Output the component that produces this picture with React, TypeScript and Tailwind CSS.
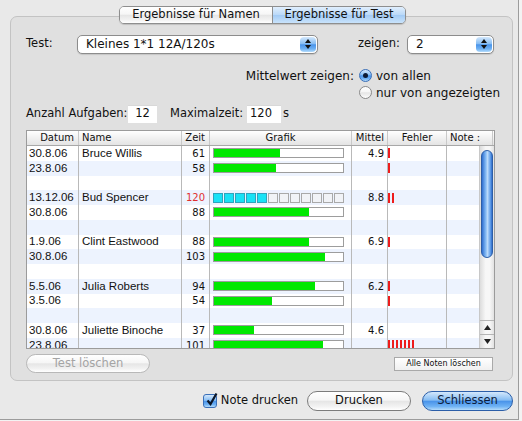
import React from "react";

type Row = { d: string; n?: string; t: number; m?: string; f: number } | null;

const rows: Row[] = [
  { d: "30.8.06", n: "Bruce Willis", t: 61, m: "4.9", f: 1 },
  { d: "23.8.06", t: 58, f: 1 },
  null,
  { d: "13.12.06", n: "Bud Spencer", t: 120, m: "8.8", f: 2 },
  { d: "30.8.06", t: 88, f: 0 },
  null,
  { d: "1.9.06", n: "Clint Eastwood", t: 88, m: "6.9", f: 1 },
  { d: "30.8.06", t: 103, f: 0 },
  null,
  { d: "5.5.06", n: "Julia Roberts", t: 94, m: "6.2", f: 1 },
  { d: "3.5.06", t: 54, f: 1 },
  null,
  { d: "30.8.06", n: "Juliette Binoche", t: 37, m: "4.6", f: 0 },
  { d: "23.8.06", t: 101, f: 7 },
];

const aquaBlue =
  "bg-[linear-gradient(to_bottom,#d4e8fc,#86bdf3_45%,#4a94ea_52%,#6fb2f4_80%,#b5dcfb)]";
const aquaWhite =
  "bg-[linear-gradient(to_bottom,#ffffff,#f6f6f6_45%,#e6e6e6_52%,#f2f2f2_80%,#ffffff)]";

function Popup({ className, label }: { className: string; label: string }) {
  return (
    <div
      className={`flex h-[19px] items-stretch rounded-[5px] border border-[#8c8c8c] bg-white p-[1px] shadow-[0_1px_1px_rgba(0,0,0,0.12)] ${className}`}
    >
      <div className="flex flex-1 items-center pl-[7px] text-[12px]">{label}</div>
      <div
        className={`flex w-[16px] flex-col items-center justify-center gap-[2px] rounded-[4px] ${aquaBlue}`}
      >
        <svg width="6" height="4" viewBox="0 0 6 4">
          <path d="M0 4L3 0L6 4Z" fill="#111" />
        </svg>
        <svg width="6" height="4" viewBox="0 0 6 4">
          <path d="M0 0L3 4L6 0Z" fill="#111" />
        </svg>
      </div>
    </div>
  );
}

function Radio({ on }: { on?: boolean }) {
  return on ? (
    <div
      className={`flex h-[13px] w-[13px] shrink-0 items-center justify-center rounded-full border border-[#3a6fb8] ${aquaBlue}`}
    >
      <div className="h-[5px] w-[5px] rounded-full bg-[#0c1a33]" />
    </div>
  ) : (
    <div
      className={`h-[13px] w-[13px] shrink-0 rounded-full border border-[#8a8a8a] ${aquaWhite}`}
    />
  );
}

function Bar({ t }: { t: number }) {
  if (t >= 120) {
    return (
      <div className="ml-[3px] flex w-[131px] gap-[1px]">
        {Array.from({ length: 12 }).map((_, i) => (
          <div
            key={i}
            className={
              i < 5
                ? "h-[10px] w-[10px] border border-[#2fa3bd] bg-[#19e2f6]"
                : "h-[10px] w-[10px] border border-[#a9a9a9] bg-[#f1f3f7]"
            }
          />
        ))}
      </div>
    );
  }
  return (
    <div className="ml-[3px] h-[10px] w-[131px] border border-[#9d9d9d] bg-white">
      <div className="h-full bg-[#00e800]" style={{ width: `${(t / 120) * 100}%` }} />
    </div>
  );
}

function TableRow({ row, i }: { row: Row; i: number }) {
  const bg = i % 2 === 1 ? "bg-[#edf3fe]" : "bg-white";
  const line = "border-r border-[#b9b9b9]";
  return (
    <div className={`flex h-[14.75px] shrink-0 items-stretch ${bg}`}>
      <div className={`flex w-[52px] items-center whitespace-nowrap pl-[2px] font-['Liberation_Sans',sans-serif] text-[11.5px] ${line}`}>
        {row?.d}
      </div>
      <div className={`flex w-[103px] items-center whitespace-nowrap pl-[3px] font-['Liberation_Sans',sans-serif] text-[11.5px] ${line}`}>
        {row?.n}
      </div>
      <div
        className={`flex w-[28px] items-center justify-end pr-[4px] text-[10px] ${
          row && row.t >= 120 ? "text-[#e03030]" : ""
        } ${line}`}
      >
        {row?.t}
      </div>
      <div className={`flex w-[142px] items-center ${line}`}>{row && <Bar t={row.t} />}</div>
      <div className={`flex w-[36px] items-center justify-end pr-[3px] text-[10px] ${line}`}>
        {row?.m}
      </div>
      <div className={`flex w-[59px] items-center gap-[2px] ${line}`}>
        {row &&
          Array.from({ length: row.f }).map((_, k) => (
            <div key={k} className="h-[10px] w-[2px] bg-[#ee1c1c]" />
          ))}
      </div>
      <div className="w-[32px]" />
    </div>
  );
}

function Scrollbar() {
  return (
    <div className="flex w-[15px] flex-col border-l border-[#c8c8c8] bg-[linear-gradient(to_right,#dcdcdc,#f7f7f7_40%,#f7f7f7_70%,#e2e2e2)]">
      <div className="flex-1 px-[1px] pt-[4px] pb-[2px]">
        <div className="h-[108px] rounded-full border border-[#2d5fa8] bg-[linear-gradient(to_right,#2f6fd0,#7db5f2_35%,#b9dafb_55%,#5d9ae6_85%,#2f6ccc)]" />
      </div>
      <div className="flex h-[14px] items-center justify-center border-t border-[#b5b5b5]">
        <svg width="7" height="5" viewBox="0 0 7 5">
          <path d="M0 5L3.5 0L7 5Z" fill="#222" />
        </svg>
      </div>
      <div className="flex h-[14px] items-center justify-center border-t border-[#b5b5b5]">
        <svg width="7" height="5" viewBox="0 0 7 5">
          <path d="M0 0L3.5 5L7 0Z" fill="#222" />
        </svg>
      </div>
    </div>
  );
}

function Table() {
  const h = "border-r border-[#c9c9c9]";
  return (
    <div className="mt-[6px] w-[469px] border border-[#9b9b9b] bg-white">
      <div className="flex h-[15px] border-b border-[#a8a8a8] bg-[linear-gradient(to_bottom,#ffffff,#f1f1f1_50%,#e4e4e4)] text-[10px] leading-[14px]">
        <div className={`w-[52px] pr-[4px] text-right ${h}`}>Datum</div>
        <div className={`w-[103px] pl-[3px] ${h}`}>Name</div>
        <div className={`w-[28px] pr-[4px] text-right ${h}`}>Zeit</div>
        <div className={`w-[142px] text-center ${h}`}>Grafik</div>
        <div className={`w-[36px] pr-[3px] text-right ${h}`}>Mittel</div>
        <div className={`w-[59px] text-center ${h}`}>Fehler</div>
        <div className={`w-[46px] overflow-hidden whitespace-nowrap pl-[3px] ${h}`}>Note :</div>
      </div>
      <div className="flex h-[202px] overflow-hidden">
        <div className="flex w-[452px] flex-col overflow-hidden">
          {rows.map((r, i) => (
            <TableRow key={i} row={r} i={i} />
          ))}
        </div>
        <Scrollbar />
      </div>
    </div>
  );
}

export default function App() {
  return (
    <div className="h-[421px] w-[522px] bg-[#f3f3f3] font-['DejaVu_Sans',sans-serif] text-[11.5px] text-[#111]">
      <div className="flex h-[420px] w-[519px] flex-col border-r border-b border-[#9c9c9c] bg-[#e9e9e9] pt-[6px]">
        {/* tabs */}
        <div className="relative z-10 ml-[119px] flex h-[18px] w-[287px] overflow-hidden rounded-[5px] border border-[#8e8e8e] shadow-[0_1px_1px_rgba(0,0,0,0.15)]">
          <div className={`flex w-[153px] items-center justify-center border-r border-[#8e8e8e] ${aquaWhite}`}>
            Ergebnisse für Namen
          </div>
          <div className="flex flex-1 items-center justify-center bg-[linear-gradient(to_bottom,#e1effd,#b9d8f8_50%,#a3cbf5_52%,#c9e3fb)]">
            Ergebnisse für Test
          </div>
        </div>

        {/* group box */}
        <div className="-mt-[8px] ml-[10px] flex h-[365px] w-[503px] flex-col rounded-[7px] border border-[#c3c3c3] bg-[#e0e0e0] pt-[17px] pr-[17px] pl-[15px]">
          <div className="flex h-[20px] items-center">
            <div className="w-[51px]">Test:</div>
            <Popup className="w-[241px]" label="Kleines 1*1 12A/120s" />
            <div className="ml-[40px] w-[49px]">zeigen:</div>
            <Popup className="w-[87px]" label="2" />
          </div>

          <div className="mt-[13px] flex h-[17px] items-center whitespace-nowrap">
            <div className="w-[333px] shrink-0 pr-[5px] text-right text-[12px]">Mittelwert zeigen:</div>
            <Radio on />
            <div className="ml-[4px] text-[12px]">von allen</div>
          </div>
          <div className="flex h-[17px] items-center whitespace-nowrap pl-[333px]">
            <Radio />
            <div className="ml-[4px] text-[12px]">nur von angezeigten</div>
          </div>

          <div className="mt-[3px] flex h-[20px] items-center">
            <div className="w-[102px]">Anzahl Aufgaben:</div>
            <div className="flex h-[18px] w-[29px] items-center justify-center bg-white shadow-[inset_0_1px_0_#d8d8d8]">
              12
            </div>
            <div className="ml-[13px] w-[77px]">Maximalzeit:</div>
            <div className="flex h-[18px] w-[34px] items-center bg-white pl-[3px] shadow-[inset_0_1px_0_#d8d8d8]">
              120
            </div>
            <div className="ml-[2px]">s</div>
          </div>

          <Table />

          <div className="mt-[5px] flex h-[19px] items-center justify-between">
            <div
              className={`flex h-[19px] w-[124px] items-center justify-center rounded-full border border-[#b8b8b8] text-[#a4a4a4] ${aquaWhite}`}
            >
              Test löschen
            </div>
            <div className="mr-[2px] flex h-[14px] w-[99px] items-center justify-center border border-[#a9a9a9] bg-[linear-gradient(to_bottom,#ffffff,#f0f0f0)] text-[8px]">
              Alle Noten löschen
            </div>
          </div>
        </div>

        {/* bottom bar */}
        <div className="mt-[10px] flex h-[20px] items-center justify-end pr-[5px]">
          <div
            className={`relative h-[14px] w-[14px] rounded-[3px] border border-[#3a6fb8] ${aquaBlue}`}
          >
            <svg className="absolute -top-[3px] left-[1px]" width="14" height="15" viewBox="0 0 14 15">
              <path d="M2.5 8.5L5.5 12L11.5 1.5" fill="none" stroke="#0b1628" strokeWidth="2.2" />
            </svg>
          </div>
          <div className="ml-[4px]">Note drucken</div>
          <div
            className={`ml-[9px] flex h-[20px] w-[104px] items-center justify-center rounded-full border border-[#7c7c7c] ${aquaWhite}`}
          >
            Drucken
          </div>
          <div
            className={`ml-[11px] flex h-[20px] w-[91px] items-center justify-center rounded-full border border-[#2b5ea8] text-[#0d1d3c] ${aquaBlue}`}
          >
            Schliessen
          </div>
        </div>
      </div>
    </div>
  );
}
